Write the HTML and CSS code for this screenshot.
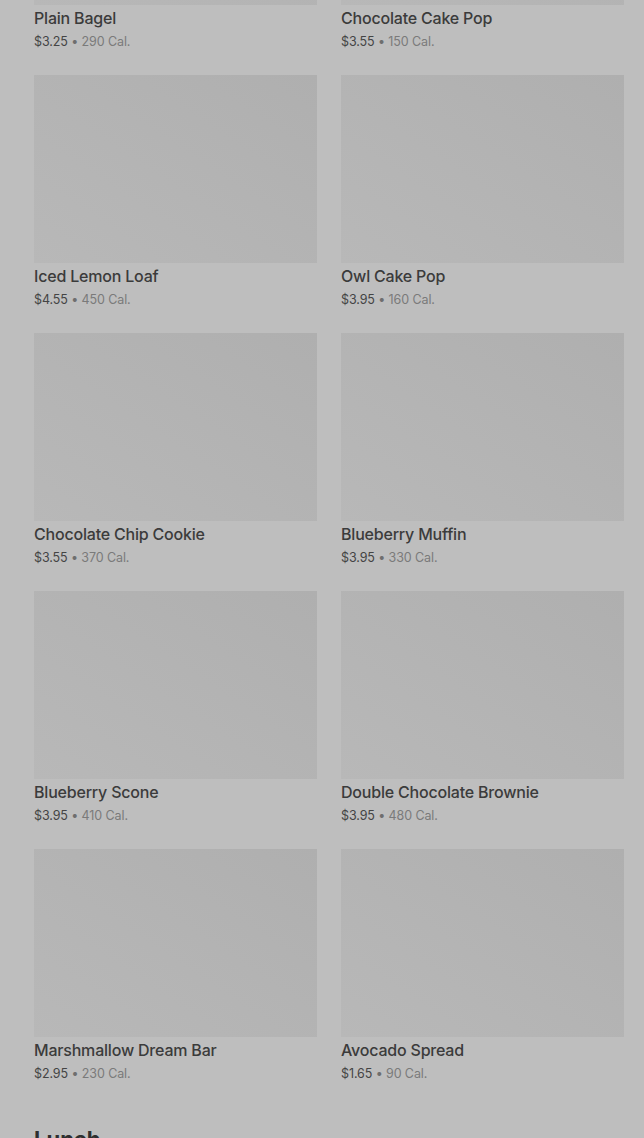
FILE: index.html
```html
<!DOCTYPE html>
<html lang="en">
<head>
    <meta charset="UTF-8">
    <meta name="viewport" content="width=device-width, initial-scale=1.0">
    <title>Menu - Bakery</title>
    <link rel="stylesheet" href="styles.css">
</head>
<body>
    <!-- Bakery grid (scrolled view) -->
    <div class="menu-section">
        <div class="product-grid">
            <div class="product">
                <div class="product-image"></div>
                <div class="product-name">Plain Bagel</div>
                <div class="product-meta"><span class="price">$3.25</span> • <span class="cal">290 Cal.</span></div>
            </div>
            <div class="product">
                <div class="product-image"></div>
                <div class="product-name">Chocolate Cake Pop</div>
                <div class="product-meta"><span class="price">$3.55</span> • <span class="cal">150 Cal.</span></div>
            </div>
            <div class="product">
                <div class="product-image"></div>
                <div class="product-name">Iced Lemon Loaf</div>
                <div class="product-meta"><span class="price">$4.55</span> • <span class="cal">450 Cal.</span></div>
            </div>
            <div class="product">
                <div class="product-image"></div>
                <div class="product-name">Owl Cake Pop</div>
                <div class="product-meta"><span class="price">$3.95</span> • <span class="cal">160 Cal.</span></div>
            </div>
            <div class="product">
                <div class="product-image"></div>
                <div class="product-name">Chocolate Chip Cookie</div>
                <div class="product-meta"><span class="price">$3.55</span> • <span class="cal">370 Cal.</span></div>
            </div>
            <div class="product">
                <div class="product-image"></div>
                <div class="product-name">Blueberry Muffin</div>
                <div class="product-meta"><span class="price">$3.95</span> • <span class="cal">330 Cal.</span></div>
            </div>
            <div class="product">
                <div class="product-image"></div>
                <div class="product-name">Blueberry Scone</div>
                <div class="product-meta"><span class="price">$3.95</span> • <span class="cal">410 Cal.</span></div>
            </div>
            <div class="product">
                <div class="product-image"></div>
                <div class="product-name">Double Chocolate Brownie</div>
                <div class="product-meta"><span class="price">$3.95</span> • <span class="cal">480 Cal.</span></div>
            </div>
            <div class="product">
                <div class="product-image"></div>
                <div class="product-name">Marshmallow Dream Bar</div>
                <div class="product-meta"><span class="price">$2.95</span> • <span class="cal">230 Cal.</span></div>
            </div>
            <div class="product">
                <div class="product-image"></div>
                <div class="product-name">Avocado Spread</div>
                <div class="product-meta"><span class="price">$1.65</span> • <span class="cal">90 Cal.</span></div>
            </div>
        </div>
    </div>

    <!-- Next section -->
    <div class="menu-section">
        <h2 class="section-title">Lunch</h2>
    </div>
</body>
</html>
```

FILE: styles.css
```css
body {
    font-family: Inter, "Liberation Sans", sans-serif;
    margin: 0;
    background-color: #bebebe;
    color: #3a3a3a;
    overflow: hidden;
}

/* Sections */
.menu-section {
    padding: 0 20px 0 34px;
}

.product-grid {
    display: grid;
    grid-template-columns: 1fr 1fr;
    column-gap: 24px;
    row-gap: 22px;
    margin-top: -183px;
}

/* Product card */
.product-image {
    height: 188px;
    background: linear-gradient(to top right, #b8b8b8, #afafaf);
}

.product-name {
    font-size: 16px;
    font-weight: 500;
    line-height: 22px;
    letter-spacing: -0.2px;
    margin-top: 2px;
    color: #3b3b3b;
}

.product-meta {
    font-size: 12.5px;
    line-height: 22px;
    letter-spacing: -0.1px;
    padding-top: 2px;
    color: #6e6e6e;
}

.product-meta .price {
    color: #444444;
}

.product-meta .cal {
    color: #7a7a7a;
}

.section-title {
    font-size: 22px;
    font-weight: 700;
    color: #2e2e2e;
    margin: 39px 0 0;
    line-height: 30px;
}
```
